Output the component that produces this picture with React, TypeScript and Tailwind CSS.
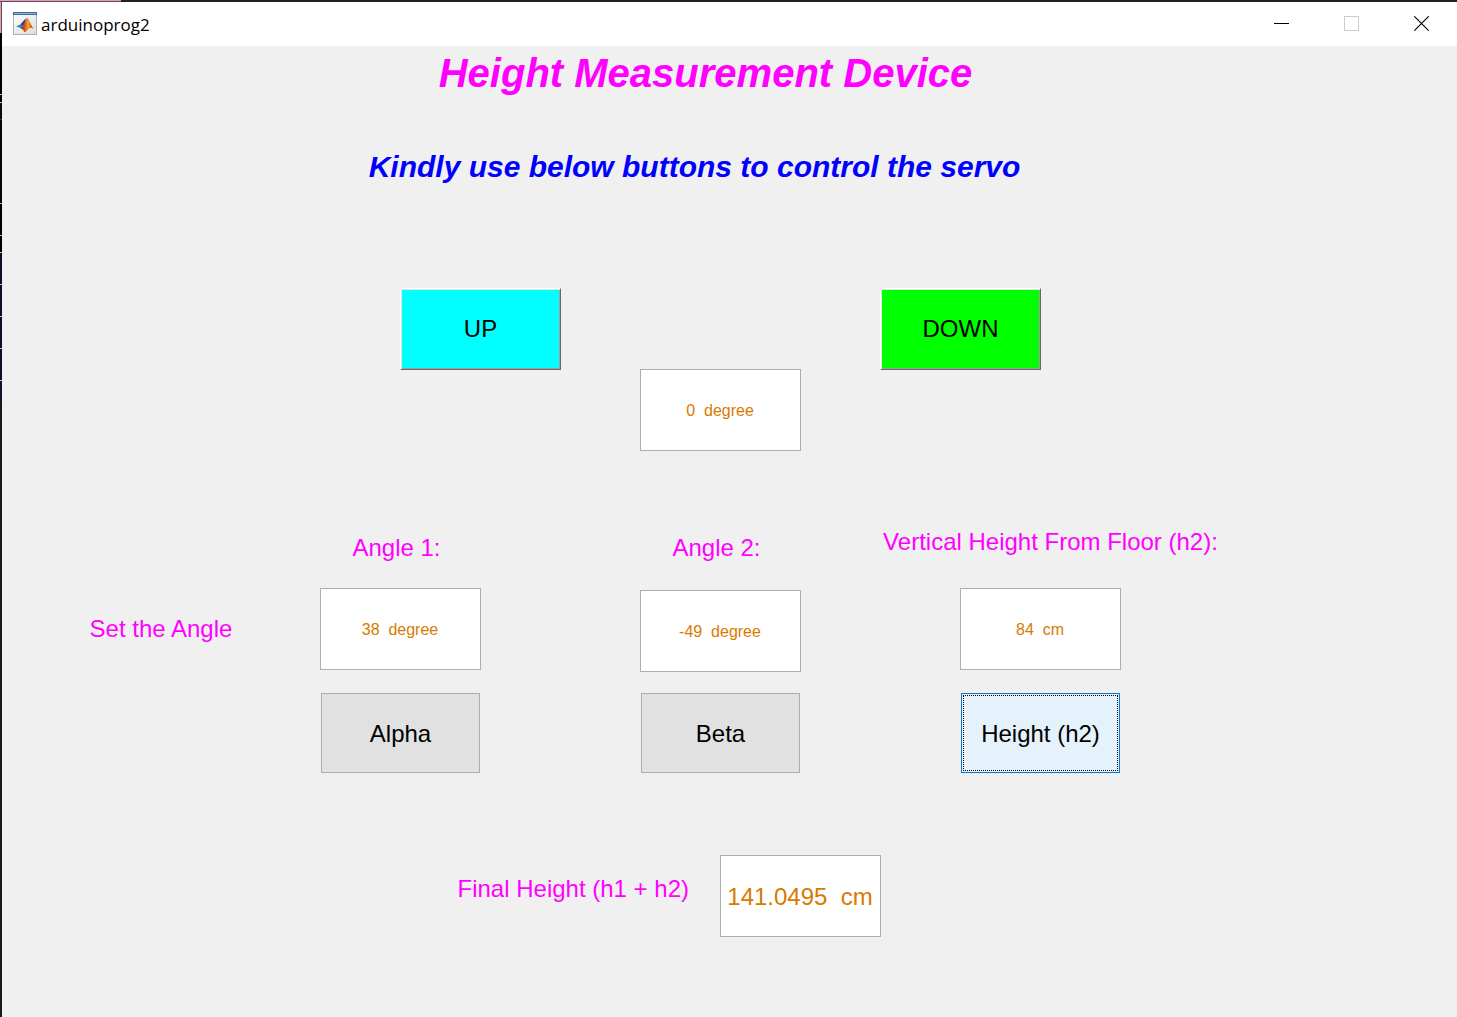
import React from "react";

const edgeSegments: [number, string][] = [
  [61, "#000000"], [1, "#c8c8c8"], [7, "#000000"], [1, "#c8c8c8"], [16, "#0c0c10"],
  [1, "#3c3c3c"], [83, "#060608"], [1, "#c8c8c8"], [31, "#000000"], [1, "#c8c8c8"],
  [16, "#000000"], [1, "#c8c8c8"], [31, "#0a1020"], [1, "#c8c8c8"], [31, "#0a1020"],
  [1, "#c8c8c8"], [31, "#0a1020"], [1, "#c8c8c8"], [31, "#0a1020"], [1, "#c8c8c8"],
  [24, "#101828"],
];

function DesktopEdge() {
  return (
    <div className="flex w-[2px] shrink-0 flex-col bg-[#1c1a1c]" aria-hidden="true">
      <div className="h-[31px] border-r border-[#6b4a58] bg-[#d9a0b8]" />
      {edgeSegments.map(([height, color], i) => (
        <div key={i} style={{ height, backgroundColor: color }} />
      ))}
    </div>
  );
}

function MatlabIcon() {
  return (
    <svg width="24" height="24" viewBox="0 0 24 24" aria-hidden="true">
      <defs>
        <linearGradient id="panel" x1="0" y1="0" x2="1" y2="1">
          <stop offset="0" stopColor="#ffffff" />
          <stop offset="1" stopColor="#dcdcdc" />
        </linearGradient>
        <linearGradient id="flame" x1="0" y1="0" x2="1" y2="0">
          <stop offset="0" stopColor="#7c1f10" />
          <stop offset="0.4" stopColor="#e8641b" />
          <stop offset="0.6" stopColor="#f7a531" />
          <stop offset="1" stopColor="#a52a12" />
        </linearGradient>
      </defs>
      <rect x="0.5" y="0.5" width="23" height="22" fill="url(#panel)" stroke="#a9b0b6" />
      <rect x="0" y="0" width="24" height="3" fill="#3f6a94" />
      <rect x="1" y="1" width="22" height="1" fill="#8fb8de" />
      <path d="M3 14.5 8 12 11 8.5 13 6.5 11.5 12 8.5 16.5 6.5 15.5Z" fill="#3f7fb5" />
      <path d="M8 12 11 8.5 13 6.5 12 11 9.5 14Z" fill="#28457a" />
      <path d="M14 5.5C15.5 6 17 11 20.5 17 18.5 15.2 17 15.5 15.3 17.3 14 18.8 12.8 20 11.3 20.2 10.8 18.3 9.8 17 7.5 16.2 10.5 15.2 12 10.5 14 5.5Z" fill="url(#flame)" />
    </svg>
  );
}

function TitleBar() {
  return (
    <header className="flex h-11 items-center bg-white pl-[11px]">
      <MatlabIcon />
      <span className="ml-1 flex-1 pt-px font-['Open_Sans','Noto_Sans',sans-serif] text-[17px] leading-6 text-black">
        arduinoprog2
      </span>
      <button type="button" aria-label="Minimize" className="flex h-11 w-[69px] items-center justify-center pb-px">
        <svg width="15" height="15" viewBox="0 0 15 15" shapeRendering="crispEdges">
          <path d="M0 7.5H15" stroke="#000" />
        </svg>
      </button>
      <button type="button" aria-label="Maximize" disabled className="flex h-11 w-[70px] items-center justify-center pb-px">
        <svg width="15" height="15" viewBox="0 0 15 15" shapeRendering="crispEdges">
          <rect x="0.5" y="0.5" width="14" height="14" fill="none" stroke="#ccc" />
        </svg>
      </button>
      <button type="button" aria-label="Close" className="flex h-11 w-[71px] items-center justify-center pb-px">
        <svg width="15" height="15" viewBox="0 0 15 15">
          <path d="M0.3 0.3 14.7 14.7M14.7 0.3 0.3 14.7" stroke="#000" strokeWidth="1.1" />
        </svg>
      </button>
    </header>
  );
}

function Readout({ id, label, value, className = "text-[16px]" }: { id: string; label?: string; value: string; className?: string }) {
  return (
    <input
      id={id}
      type="text"
      readOnly
      aria-label={label}
      value={value}
      className={`h-[82px] w-full border border-[#abadb3] bg-white pt-[2px] pr-px text-center text-[#d97a00] outline-none ${className}`}
    />
  );
}

const bevel =
  "h-[82px] border border-t-white border-l-white border-r-[#696969] border-b-[#696969] text-[24px] text-black shadow-[inset_1px_1px_0_#e3e3e3,inset_-1px_-1px_0_#a0a0a0]";
const caption = "flex items-center justify-center whitespace-nowrap text-[24px] leading-8 text-[#ff00ff]";
const flat = "row-start-3 mx-px mt-[21px] h-20 border border-[#adadad] bg-[#e1e1e1] pt-[2px] text-[24px] text-black";

export default function App() {
  return (
    <div className="flex min-h-screen flex-col bg-[#f0f0f0] font-['Liberation_Sans',Arial,sans-serif]">
      <div className="flex h-[2px] shrink-0" aria-hidden="true">
        <div className="w-[121px] border-b border-[#6b4a58] bg-[#d9a0b8]" />
        <div className="flex-1 bg-[#222022]" />
      </div>
      <div className="flex flex-1">
        <DesktopEdge />
        <div className="flex min-w-0 flex-1 flex-col">
          <TitleBar />
          <main className="pt-[3px] pb-10">
            <h1 className="pr-12 text-center text-[40px] leading-12 font-bold text-[#ff00ff] italic">
              Height Measurement Device
            </h1>
            <h2 className="mt-[50px] pr-[70px] text-center text-[30px] leading-10 font-bold text-[#0000ff] italic">
              Kindly use below buttons to control the servo
            </h2>

            <section className="mt-[101px] grid grid-cols-[minmax(0,398fr)_minmax(0,161fr)_minmax(0,79fr)_minmax(0,161fr)_minmax(0,79fr)_minmax(0,161fr)_minmax(0,416fr)]">
              <button type="button" className={`col-start-2 bg-[#00ffff] ${bevel}`}>UP</button>
              <button type="button" className={`col-start-6 bg-[#00ff00] ${bevel}`}>DOWN</button>
              <div className="col-start-4 row-start-2 -mt-px">
                <Readout id="servo" label="Servo angle" value="0  degree" />
              </div>
            </section>

            <section className="mt-[75px] grid grid-cols-[minmax(0,318fr)_minmax(0,161fr)_minmax(0,159fr)_minmax(0,161fr)_minmax(0,159fr)_minmax(0,161fr)_minmax(0,336fr)]">
              <label htmlFor="angle1" className={`col-start-2 row-start-1 h-[62px] pr-2 pb-[18px] ${caption}`}>Angle 1:</label>
              <label htmlFor="angle2" className={`col-start-4 row-start-1 h-[62px] pr-2 pb-[18px] ${caption}`}>Angle 2:</label>
              <label htmlFor="height2" className={`col-start-6 row-start-1 h-[62px] pb-[30px] pl-5 ${caption}`}>
                Vertical Height From Floor (h2):
              </label>

              <p className={`col-start-1 row-start-2 h-[82px] ${caption}`}>Set the Angle</p>
              <div className="col-start-2 row-start-2"><Readout id="angle1" value="38  degree" /></div>
              <div className="col-start-4 row-start-2 pt-[2px]"><Readout id="angle2" value="-49  degree" /></div>
              <div className="col-start-6 row-start-2"><Readout id="height2" value="84  cm" /></div>

              <button type="button" className={`col-start-2 ${flat}`}>Alpha</button>
              <button type="button" className={`col-start-4 ${flat}`}>Beta</button>
              <button type="button" className="col-start-6 row-start-3 mx-px mt-[21px] h-20 border border-[#0078d7] bg-[#e5f1fb] p-px text-[24px] whitespace-nowrap text-black">
                <span className="flex h-full items-center justify-center border border-dotted border-black pt-[2px]">Height (h2)</span>
              </button>
            </section>

            <section className="mt-[82px] grid grid-cols-[minmax(0,718fr)_minmax(0,161fr)_minmax(0,576fr)]">
              <label htmlFor="final" className="pt-[18px] pr-[31px] text-right text-[24px] leading-8 whitespace-nowrap text-[#ff00ff]">
                Final Height (h1 + h2)
              </label>
              <Readout id="final" value="141.0495  cm" className="text-[24px]" />
            </section>
          </main>
        </div>
      </div>
    </div>
  );
}
